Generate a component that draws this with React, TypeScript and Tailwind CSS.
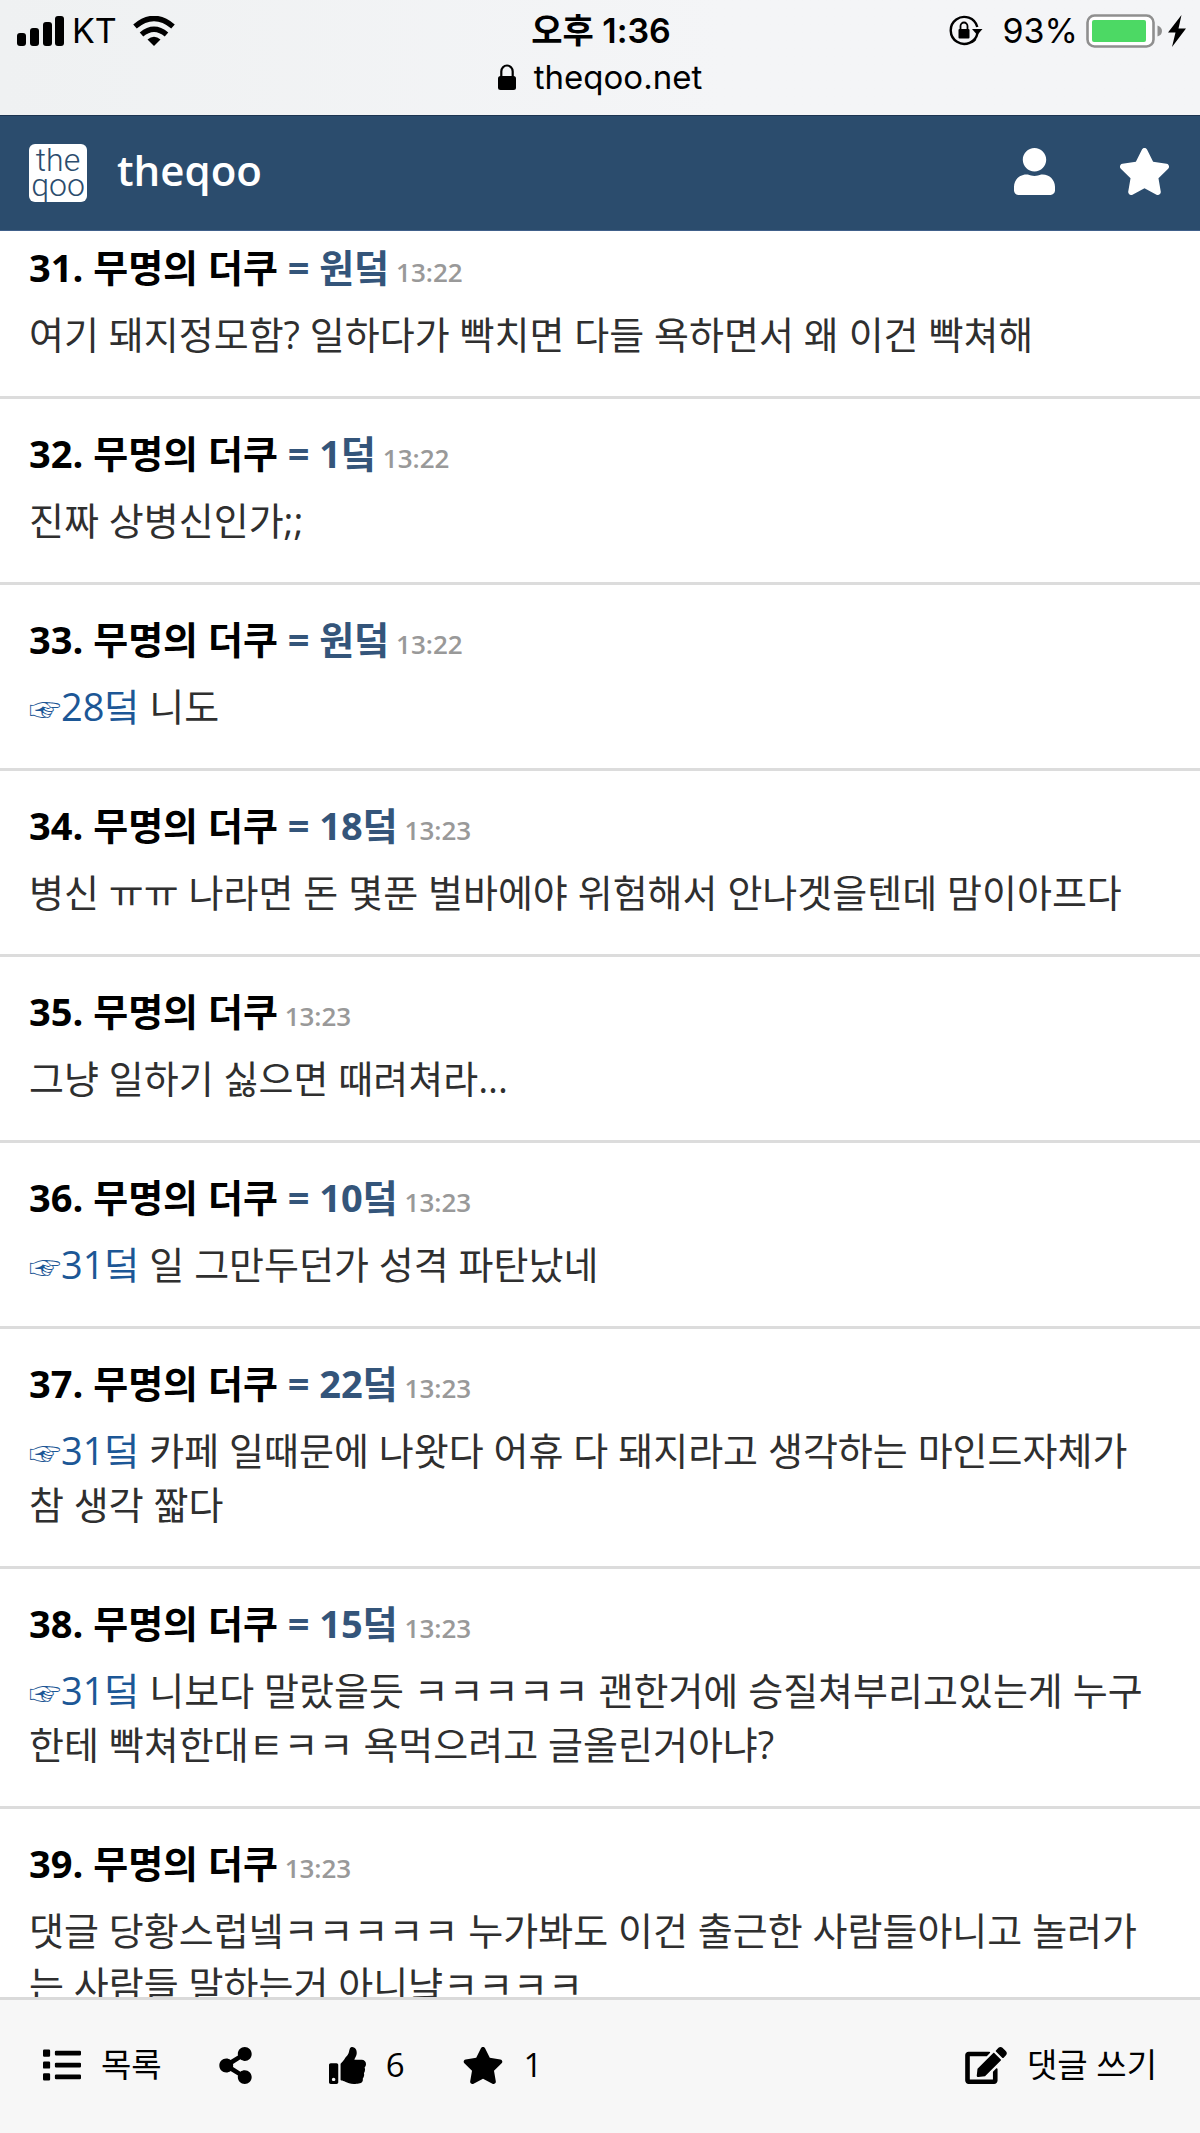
import type { ReactNode } from 'react'
import { FaEdit, FaList, FaShareAlt, FaStar, FaThumbsUp, FaUser } from 'react-icons/fa'

interface Comment {
    no: number
    alias?: string
    time: string
    replyTo?: number
    text: string
}

const COMMENTS: Comment[] = [
    { no: 31, alias: '원덬', time: '13:22', text: '여기 돼지정모함? 일하다가 빡치면 다들 욕하면서 왜 이건 빡쳐해' },
    { no: 32, alias: '1덬', time: '13:22', text: '진짜 상병신인가;;' },
    { no: 33, alias: '원덬', time: '13:22', replyTo: 28, text: '니도' },
    { no: 34, alias: '18덬', time: '13:23', text: '병신 ㅠㅠ 나라면 돈 몇푼 벌바에야 위험해서 안나겟을텐데 맘이아프다' },
    { no: 35, time: '13:23', text: '그냥 일하기 싫으면 때려쳐라...' },
    { no: 36, alias: '10덬', time: '13:23', replyTo: 31, text: '일 그만두던가 성격 파탄났네' },
    { no: 37, alias: '22덬', time: '13:23', replyTo: 31, text: '카페 일때문에 나왓다 어휴 다 돼지라고 생각하는 마인드자체가 참 생각 짧다' },
    { no: 38, alias: '15덬', time: '13:23', replyTo: 31, text: '니보다 말랐을듯 ㅋㅋㅋㅋㅋ 괜한거에 승질쳐부리고있는게 누구한테 빡쳐한대ㅌㅋㅋ 욕먹으려고 글올린거아냐?' },
    { no: 39, time: '13:23', text: '댓글 당황스럽넼ㅋㅋㅋㅋㅋ 누가봐도 이건 출근한 사람들아니고 놀러가는 사람들 말하는거 아니냨ㅋㅋㅋㅋ' }
]

function StatusBar() {
    return (
        <div className="h-[115px] shrink-0 bg-linear-to-r from-[#eff1f2] to-[#f4f5f7] to-60% text-black font-['Inter','Noto_Sans_CJK_KR',sans-serif] text-[34px] leading-[46px] pt-2">
            <div className="grid grid-cols-[1fr_auto_1fr] items-center pl-4 pr-[14px]">
                <div className="flex items-center">
                    <svg width="48" height="30" viewBox="0 0 48 30">
                        <rect x="1" y="17" width="9" height="13" rx="3" />
                        <rect x="14" y="12" width="9" height="18" rx="3" />
                        <rect x="27" y="6" width="9" height="24" rx="3" />
                        <rect x="39" y="0" width="9" height="30" rx="3" />
                    </svg>
                    <span className="ml-2">KT</span>
                    <svg width="42" height="30" viewBox="0 0 42 30" className="ml-4" fill="none" stroke="#000" strokeWidth="5.5">
                        <path d="M2 10.5Q21-5.5 40 10.5" />
                        <path d="M8.5 18.5Q21 8 33.5 18.5" />
                        <path d="M21 30l-6.5-6.5Q21 18 27.5 23.5z" fill="#000" stroke="none" />
                    </svg>
                </div>
                <span className="font-semibold">오후 1:36</span>
                <div className="flex items-center justify-end">
                    <svg width="34" height="32" viewBox="0 0 34 32" fill="none" stroke="#000" strokeWidth="2.4">
                        <path d="M28.5 18A13.5 13.5 0 1 1 28.3 12" />
                        <path d="M26.5 24A13.5 13.5 0 0 1 22 27.5" />
                        <path d="M23 14h10.5l-5.2 6z" fill="#000" stroke="none" />
                        <rect x="9.5" y="14" width="11" height="9.5" rx="1" fill="#000" stroke="none" />
                        <path d="M11.5 14v-3a3.5 3.5 0 0 1 7 0v3" strokeWidth="1.8" />
                    </svg>
                    <span className="ml-5">93%</span>
                    <svg width="78" height="34" viewBox="0 0 78 34" className="ml-2">
                        <rect x="1.5" y="1.5" width="66" height="31" rx="7" fill="#fff" stroke="#8f8f8f" strokeWidth="2.6" />
                        <rect x="6" y="6" width="54" height="22" rx="2" fill="#4cd964" />
                        <path d="M71.5 11.5q4.5 1.5 4.5 5.5t-4.5 5.5z" fill="#8f8f8f" />
                    </svg>
                    <svg width="18" height="32" viewBox="0 0 18 32" className="ml-1">
                        <path d="M13.5 0L0 17.5h7.5L4 32l14-18.500h-7.500z" />
                    </svg>
                </div>
            </div>
            <div className="flex items-center justify-center gap-[18px]">
                <svg width="18" height="26" viewBox="0 0 18 26">
                    <rect x="0" y="12" width="18" height="14" rx="2.5" />
                    <path d="M3.3 13V7.5a5.7 6 0 0 1 11.4 0V13" fill="none" stroke="#000" strokeWidth="2.2" />
                </svg>
                <span className="text-[33px]">theqoo.net</span>
            </div>
        </div>
    )
}

function Header() {
    return (
        <header className="flex h-[116px] shrink-0 items-center border-t border-b border-t-[#1c3450] border-b-[#40608a] bg-[#2b4c6d] px-[29px] text-white">
            <a href="#" className="flex items-center gap-[30px]">
                <span className="flex h-[58px] w-[58px] flex-col items-center justify-center rounded-md bg-white font-['Roboto',sans-serif] text-[32px] leading-[25px] font-light text-[#2b4c6d]">
                    <span>the</span>
                    <span>qoo</span>
                </span>
                <span className="pb-1.5 text-[42px] leading-[54px] font-semibold">theqoo</span>
            </a>
            <div className="ml-auto flex items-center gap-[63px] pb-1">
                <button aria-label="회원">
                    <FaUser className="h-[47px] w-[41px]" />
                </button>
                <button aria-label="스크랩">
                    <FaStar className="h-[47px] w-[53px]" />
                </button>
            </div>
        </header>
    )
}

function CommentRow({ comment }: { comment: Comment }) {
    return (
        <li className="border-b-3 border-[#dcdcdc] px-[29px] pt-[27px] pb-[35px] first:pt-[9px]">
            <div className="text-[38px] leading-[54px] font-bold text-black">
                {comment.no}. 무명의 더쿠
                {comment.alias && <span className="text-[#34557a]"> = {comment.alias}</span>}
                <span className="text-[26px] leading-none font-semibold text-[#999]"> {comment.time}</span>
            </div>
            <p className="mt-[13px] text-[38px] leading-[54px] text-[#2f2f2f]">
                {comment.replyTo && (
                    <>
                        <a href="#" className="text-[#1c5796]">
                            <span className="text-[32px] leading-none">☞</span>
                            {comment.replyTo}덬
                        </a>{' '}
                    </>
                )}
                {comment.text}
            </p>
        </li>
    )
}

function BarButton({ icon, children }: { icon: ReactNode; children: ReactNode }) {
    return (
        <button className="flex items-center gap-5">
            {icon}
            <span>{children}</span>
        </button>
    )
}

function BottomBar() {
    return (
        <nav className="flex h-[136px] shrink-0 items-center gap-[57px] border-t-3 border-[#dadada] bg-[#f7f7f7] px-[43px] pb-[3px] text-[33px] leading-[46px] text-black">
            <BarButton icon={<FaList className="h-[38px] w-[38px]" />}>목록</BarButton>
            <button aria-label="공유" className="mr-5">
                <FaShareAlt className="h-[37px] w-[33px]" />
            </button>
            <BarButton icon={<FaThumbsUp className="h-[37px] w-[37px]" />}>6</BarButton>
            <BarButton icon={<FaStar className="h-[37px] w-[42px]" />}>1</BarButton>
            <div className="ml-auto">
                <BarButton icon={<FaEdit className="h-[37px] w-[42px]" />}>댓글 쓰기</BarButton>
            </div>
        </nav>
    )
}

export default function App() {
    return (
        <div className="flex h-screen flex-col bg-white font-['Open_Sans','Noto_Sans_CJK_KR',sans-serif]">
            <StatusBar />
            <Header />
            <main className="min-h-0 flex-1 overflow-y-auto [scrollbar-width:none]">
                <ul>
                    {COMMENTS.map(c => (
                        <CommentRow key={c.no} comment={c} />
                    ))}
                </ul>
            </main>
            <BottomBar />
        </div>
    )
}
